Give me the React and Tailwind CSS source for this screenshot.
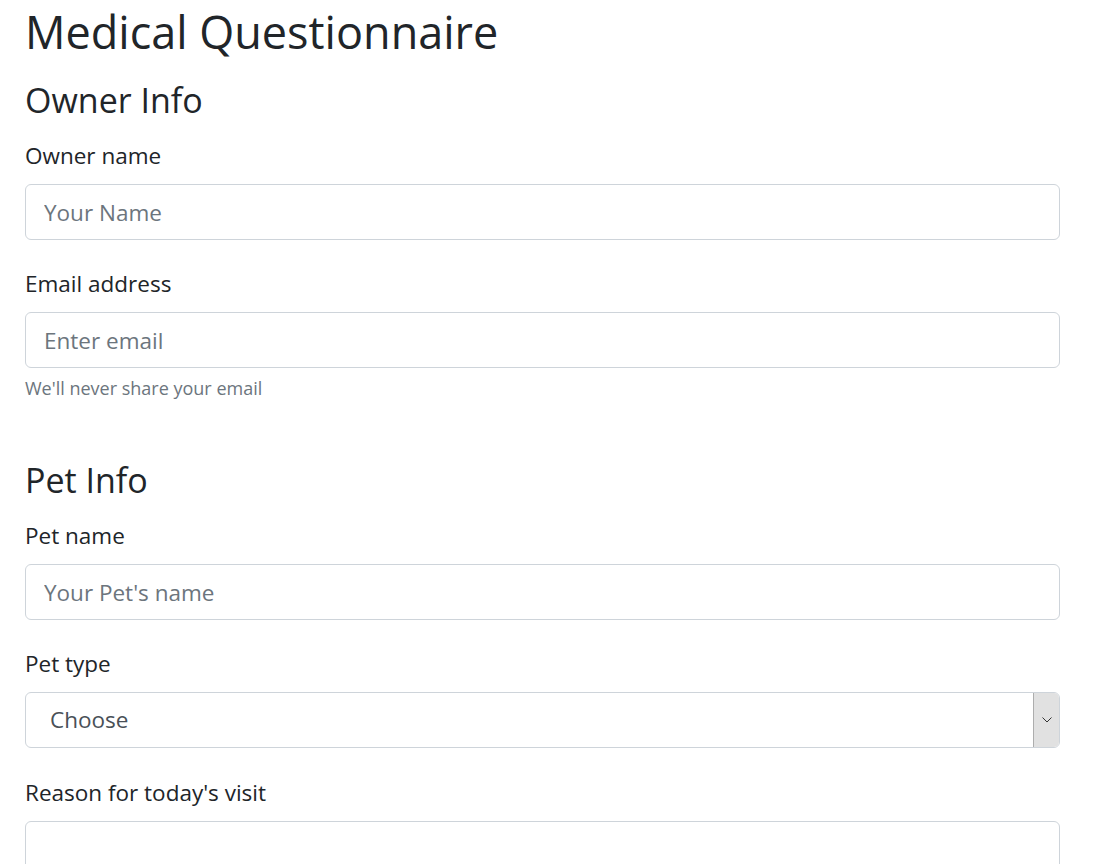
import React from 'react';

const Field = ({ label, placeholder, type = 'text', className = 'mb-[26px]', children }) => {
  return (
    <div className={className}>
      <label className="block text-[22.5px] leading-[36px] mb-[10px]">{label}</label>
      <input
        type={type}
        className="block w-full h-[56px] px-[18px] text-[22.5px] text-[#495057] bg-white border border-[#ced4da] rounded-[6px] placeholder:text-[#6c757d] focus:outline-none"
        placeholder={placeholder}
      />
      {children}
    </div>
  );
};

const App = () => {
  return (
    <div className="min-h-screen bg-white pt-[1px] pl-[25px] pr-[39px] font-['Open_Sans',sans-serif] text-[#212529]">
      <h1 className="text-[45px] leading-[62px] mb-[14px]">Medical Questionnaire</h1>

      {/* Owner info */}
      <h2 className="text-[34px] leading-[46px] mb-[15px]">Owner Info</h2>
      <Field label="Owner name" placeholder="Your Name" />
      <Field label="Email address" placeholder="Enter email" type="email" className="mb-[55px]">
        <p className="mt-[7px] text-[18px] leading-[27px] text-[#6c757d]">We'll never share your email</p>
      </Field>

      {/* Pet info */}
      <h2 className="text-[34px] leading-[46px] mb-[15px]">Pet Info</h2>
      <Field label="Pet name" placeholder="Your Pet's name" />

      <div className="mb-[27px]">
        <label className="block text-[22.5px] leading-[36px] mb-[10px]">Pet type</label>
        <div className="flex h-[56px] w-full bg-white border border-[#ced4da] rounded-[6px] overflow-hidden">
          <select
            className="flex-1 appearance-none bg-transparent pl-[24px] text-[22.5px] text-[#495057] focus:outline-none"
            defaultValue="Choose"
          >
            <option value="Choose">Choose</option>
            <option value="Dog">Dog</option>
            <option value="Cat">Cat</option>
            <option value="Other">Other</option>
          </select>
          <div className="flex items-center justify-center w-[26px] bg-[#e1e1e1] border-l border-[#adadad]">
            <svg width="10" height="6" viewBox="0 0 10 6" fill="none">
              <path d="M0.5 0.5L5 5L9.5 0.5" stroke="#333" strokeWidth="1" />
            </svg>
          </div>
        </div>
      </div>

      <div>
        <label className="block text-[22.5px] leading-[36px] mb-[10px]">Reason for today's visit</label>
        <textarea
          rows={3}
          className="block w-full h-[130px] px-[18px] py-[9px] text-[22.5px] bg-white border border-[#ced4da] rounded-[6px] resize-none focus:outline-none"
        />
      </div>
    </div>
  );
};

export default App;
